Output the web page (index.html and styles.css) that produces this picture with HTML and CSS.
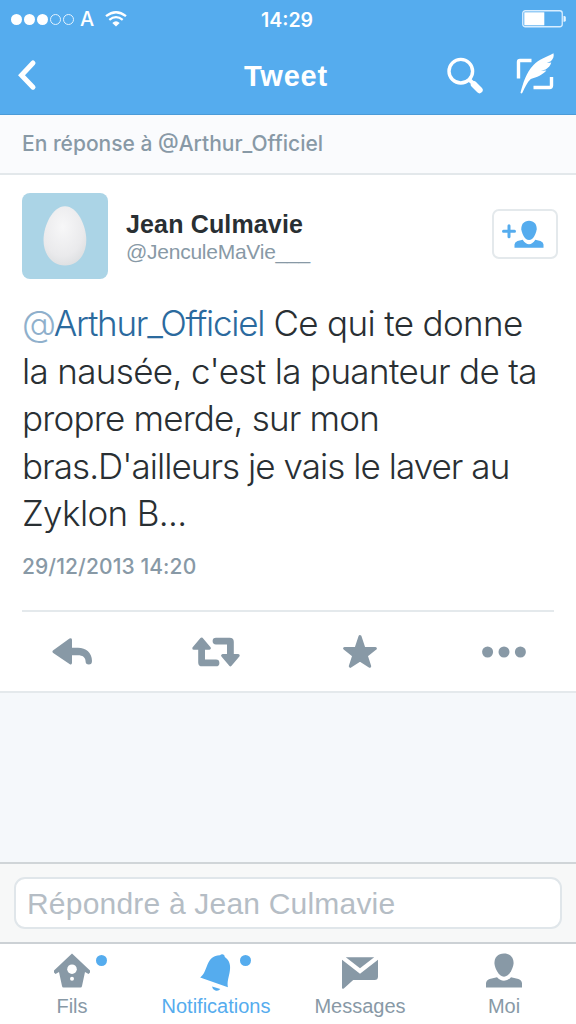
FILE: index.html
```html
<!doctype html>
<html lang="fr">
	<head>
		<title>Tweet</title>
		<meta charset="utf-8">
		<meta name="viewport" content="width=device-width, initial-scale=1.0">
		<link rel="stylesheet" href="styles.css">
	</head>
	<body>
<header class="header">
	<div class="status">
		<div class="signal">
			<i class="dot"></i><i class="dot"></i><i class="dot"></i><i class="dot empty"></i><i class="dot empty"></i>
			<span class="carrier">A</span>
			<svg class="wifi" width="22" height="16" viewBox="0 0 22 16" fill="none" stroke="#fff" stroke-width="2.3">
				<path d="M1 5.2 Q11 -2.8 21 5.2"/>
				<path d="M4.3 8.8 Q11 3.4 17.7 8.8"/>
				<path d="M7.3 12 Q11 8.6 14.7 12 L11 15.6Z" fill="#fff" stroke="none"/>
			</svg>
		</div>
		<span class="time">14:29</span>
		<svg class="battery" width="45" height="18" viewBox="0 0 45 18">
			<rect x=".75" y=".75" width="39.5" height="16" rx="2.5" fill="none" stroke="#d9eeff" stroke-width="1.3"/>
			<rect x="2.3" y="2.3" width="20" height="13" fill="#fff"/>
			<path d="M41.5 6 h1 q1.3 .4 1.3 1.5 v2.8 q0 1.1 -1.3 1.5 h-1z" fill="#e8f5ff"/>
		</svg>
	</div>
	<div class="nav">
		<svg class="back" width="20" height="32" viewBox="0 0 20 32" fill="none" stroke="#fff" stroke-width="5" stroke-linecap="round" stroke-linejoin="miter">
			<path d="M16 3 L4.5 15.2 L16 27.2"/>
		</svg>
		<h1>Tweet</h1>
		<div class="tools">
			<svg width="38" height="38" viewBox="0 0 38 38" fill="none" stroke="#fff">
				<circle cx="13.8" cy="14.2" r="11.8" stroke-width="3.4"/>
				<path d="M22.5 23 L27 27" stroke-width="4"/>
				<path d="M27 27.5 L32.5 33" stroke-width="6.4" stroke-linecap="round"/>
			</svg>
			<svg class="compose" width="40" height="42" viewBox="0 0 40 42" fill="none" stroke="#fff">
				<path d="M3.5 25.5 V9 q0-1.5 1.5-1.5 H16.5 M18.5 34.5 H34.5 q2 0 2-2 V24" stroke-width="3.4"/>
				<path d="M5.5 39.8 C8 30 11 20 18.5 12 C24 6 31 4.5 38.5 .3 C39.3 3.4 38 6.2 35.8 8.3 L31.8 10 L36.3 9.6 C35.6 12.5 33.5 15 30.6 16.4 L26 17.8 L31.4 17.6 C28 21.4 21.7 24.7 15.8 26 C12 29.5 10 34.4 7.4 39.8 Q6.4 41 5.5 39.8Z" fill="#fff" stroke="none"/>
			</svg>
		</div>
	</div>
</header>

<div class="context">En réponse à @Arthur_Officiel</div>

<div class="tweet">
	<div class="author">
		<div class="avatar">
			<svg width="86" height="86" viewBox="0 0 86 86">
				<defs>
					<radialGradient id="egg" cx=".45" cy=".35" r=".7">
						<stop offset="0" stop-color="#f7f7f8"/>
						<stop offset=".7" stop-color="#eaeaec"/>
						<stop offset="1" stop-color="#dcdee0"/>
					</radialGradient>
				</defs>
				<path d="M43 13.3 C55.5 13.3 64.3 33 64.3 47 C64.3 62 55.5 72.5 43 72.5 C30.5 72.5 21.5 62 21.5 47 C21.5 33 30.5 13.3 43 13.3Z" fill="url(#egg)"/>
			</svg>
		</div>
		<div class="names">
			<b class="name">Jean Culmavie</b>
			<span class="handle">@JenculeMaVie___</span>
		</div>
		<div class="follow">
			<svg width="44" height="30" viewBox="0 0 44 30" fill="#55acee">
				<path d="M3.5 11.2 H14.5 M9 5.7 V16.7" stroke="#55acee" stroke-width="3" stroke-linecap="round"/>
				<path d="M29 .8 C34 .8 37 4.5 36.7 9.5 C36 13.5 33.5 20 29 20 C24.5 20 22 13.5 21.3 9.5 C21 4.5 24 .8 29 .8Z"/>
				<path d="M14.5 27.7 V24.5 Q14.6 22 17.5 21 L22.7 19.8 Q25.5 24.2 29 24.2 Q32.5 24.2 35.3 19.8 L40.5 21 Q43.4 22 43.5 24.5 V27.7Z"/>
			</svg>
		</div>
	</div>
	<p class="text">
		<span class="line l1"><span class="mention"><span class="at">@</span>Arthur_Officiel</span> Ce qui te donne</span>
		<span class="line l2">la nausée, c'est la puanteur de ta</span>
		<span class="line l3">propre merde, sur mon</span>
		<span class="line l4">bras.D'ailleurs je vais le laver au</span>
		<span class="line l5">Zyklon B...</span>
	</p>
	<p class="date">29/12/2013 14:20</p>
	<div class="actions">
		<div class="action">
			<svg width="48" height="36" viewBox="0 0 48 36" fill="#8899a6">
				<path d="M5.6 16 L21.5 4.6 Q24 3.2 24 6 V13.8 H30 C38 13.8 44 19 44 27 Q44 30.5 40.8 30.5 Q37.6 30.5 37.6 27.5 C37.6 23.2 34.5 21.2 30 21.2 H24 V28.5 Q24 31.5 21.5 30 L5.6 19.2 Q3.2 17.6 5.6 16Z"/>
			</svg>
		</div>
		<div class="action">
			<svg width="48" height="36" viewBox="0 0 48 36" fill="none" stroke="#8899a6" stroke-width="6.8" stroke-linecap="round">
				<path d="M9.6 15 V28.4 Q9.6 28.9 10.2 28.9 H24 M24 7.1 H37.6 Q38.4 7.1 38.4 7.8 V20"/>
				<path d="M9.6 5 L17.4 14.2 H1.8Z M38.4 30.8 L30.6 21.6 H46.2Z" fill="#8899a6" stroke-width="3" stroke-linejoin="round"/>
			</svg>
		</div>
		<div class="action">
			<svg width="48" height="36" viewBox="0 0 48 36" fill="#8899a6" stroke="#8899a6" stroke-width="3" stroke-linejoin="round">
				<path d="M24 2.6 L27.9 14.2 L39.4 14.4 L30.3 21.7 L33.7 32.3 L24 26 L14.3 32.3 L17.7 21.7 L8.6 14.4 L20.1 14.2Z"/>
			</svg>
		</div>
		<div class="action">
			<svg width="48" height="36" viewBox="0 0 48 36" fill="#8899a6">
				<circle cx="7.6" cy="18" r="5.5"/><circle cx="24" cy="18" r="5.5"/><circle cx="40.4" cy="18" r="5.5"/>
			</svg>
		</div>
	</div>
</div>

<div class="reply">
	<div class="field">Répondre à Jean Culmavie</div>
</div>

<nav class="tabs">
	<div class="tab">
		<svg width="40" height="40" viewBox="0 0 40 40" fill="#8899a6">
			<path d="M20 1.5 L38 18.5 V20.5 L36.5 22 L33 20 L30 34 Q29.8 35.5 28.5 35.5 H11.5 Q10.2 35.5 10 34 L7 20 L3.5 22 L2 20.5 V18.5Z"/>
			<circle cx="20" cy="17.2" r="4.8" fill="#fff"/><circle cx="20" cy="26.8" r="2" fill="#fff"/>
		</svg>
		<i class="badge"></i>
		<span>Fils</span>
	</div>
	<div class="tab active">
		<svg width="40" height="40" viewBox="0 0 40 40" fill="#55acee">
			<path d="M24 3.3 Q25.4 1.7 27.3 2.5 Q28.8 3.2 28.8 5 C34 8.4 35 14 33.5 21 C32.3 27 31 30 31.9 35.2 L4.2 25.4 C8 22.5 9.2 18.5 11.3 13 C14 6.5 18 3.1 24 3.3Z"/>
			<path d="M16 34.5 L24.3 37 Q22.5 39.4 19.3 38.4 Q16.3 37.4 16 34.5Z"/>
		</svg>
		<i class="badge"></i>
		<span>Notifications</span>
	</div>
	<div class="tab">
		<svg width="40" height="40" viewBox="0 0 40 40" fill="#8899a6">
			<path d="M5.8 5.2 H34.2 L20 16.2Z"/>
			<path d="M2 7.7 L20 21.8 L38 7.7 V24.5 Q38 28 34.5 28 H13.2 L3.8 36.4 Q2 37.6 2 35.5Z"/>
		</svg>
		<span>Messages</span>
	</div>
	<div class="tab">
		<svg width="40" height="40" viewBox="0 0 40 40" fill="#8899a6">
			<path d="M20 1.5 C26.5 1.5 30 6 29.5 12 C29 16 25.5 24.7 20 24.7 C14.5 24.7 11 16 10.5 12 C10 6 13.5 1.5 20 1.5Z"/>
			<path d="M2 35.5 V31.5 Q2.1 28.2 5.6 27 L13 25.3 Q16 28.7 20 28.7 Q24 28.7 27 25.3 L34.4 27 Q37.9 28.2 38 31.5 V35.5Z"/>
		</svg>
		<span>Moi</span>
	</div>
</nav>
	</body>
</html>
```
FILE: styles.css
```css
* {
	box-sizing: border-box;
	margin: 0;
	padding: 0;
}
body {
	width: 576px;
	height: 1024px;
	display: flex;
	flex-direction: column;
	overflow: hidden;
	background-color: #f5f8fb;
	color: #292f33;
	font-family: 'Liberation Sans', Arial, sans-serif;
}
svg { display: block; flex: none; overflow: visible; }

/* header */
.header {
	height: 115px;
	background-color: #55acee;
	border-bottom: 1px solid #4b9bd8;
	color: #fff;
}
.status {
	height: 38px;
	padding: 0 9px 0 11px;
	display: grid;
	grid-template-columns: 1fr auto 1fr;
	align-items: center;
}
.signal { display: flex; align-items: center; gap: 2px; }
.dot { width: 11px; height: 11px; border-radius: 50%; background-color: #fff; }
.dot.empty { background: none; border: 1px solid #e3f3ff; }
.carrier { font: 500 20px/20px Inter, sans-serif; margin-left: 4px; }
.wifi { margin-left: 9px; }
.time { margin: 2px 4px 0 0; font: 600 19.5px/22px Inter, sans-serif; }
.battery { justify-self: end; }
.nav {
	height: 76px;
	padding: 0 21px 0 17px;
	display: grid;
	grid-template-columns: 1fr auto 1fr;
	align-items: center;
}
h1 { font-size: 29px; line-height: 34px; letter-spacing: .8px; }
.tools { display: flex; justify-content: flex-end; align-items: center; gap: 30px; }
.compose { margin-top: -4px; }

.context {
	height: 60px;
	padding: 16px 22px 0;
	background-color: #fafbfd;
	border-bottom: 2px solid #e3e8eb;
	color: #8899a6;
	font: 500 21px/26px Inter, sans-serif;
}

/* tweet */
.tweet {
	height: 518px;
	padding: 18px 22px 0;
	background-color: #fff;
	border-bottom: 2px solid #e4e9ec;
}
.author { display: flex; height: 86px; }
.avatar { width: 86px; height: 86px; border-radius: 8px; background-color: #abd4e6; }
.names { flex: 1; padding: 16px 0 0 18px; }
.name { display: block; font-size: 25px; line-height: 30px; letter-spacing: .15px; }
.handle { display: block; color: #8899a6; font-size: 21px; line-height: 25px; letter-spacing: -.25px; }
.follow {
	width: 66px;
	height: 50px;
	margin: 16px -4px 0 0;
	padding: 9px 0 0 6px;
	border: 2px solid #e4e9ec;
	border-radius: 7px;
}
.text {
	margin-top: 21px;
	font: 300 35px/47.6px Inter, sans-serif;
}
.line { display: block; white-space: nowrap; }
.l1, .l2 { letter-spacing: -.65px; }
.l3 { letter-spacing: -.8px; }
.l4 { letter-spacing: -.95px; }
.l5 { letter-spacing: -.65px; }
.mention { color: #2b6a9e; letter-spacing: -1.25px; }
.at { color: #8fb0cc; }
.date {
	margin-top: 16px;
	color: #8899a6;
	font: 500 21px/26px Inter, sans-serif;
	letter-spacing: .1px;
}
.actions {
	display: flex;
	margin: 30px -22px 0;
	padding-top: 24px;
	background: linear-gradient(#e4e9ec, #e4e9ec) 22px 0 / 532px 2px no-repeat;
}
.action { flex: 1; display: flex; justify-content: center; }

/* reply field */
.reply {
	height: 82px;
	margin-top: auto;
	padding: 13px 14px;
	background-color: #f7f8f8;
	border-top: 2px solid #d0d5d8;
	border-bottom: 2px solid #ccd1d5;
}
.field {
	height: 52px;
	padding: 0 11px;
	background-color: #fff;
	border: 2px solid #e0e6ea;
	border-radius: 11px;
	color: #b5bdc5;
	font-size: 30px;
	line-height: 50px;
	letter-spacing: .2px;
}

/* tabs */
.tabs { height: 80px; display: flex; background-color: #fff; }
.tab {
	position: relative;
	flex: 1;
	display: flex;
	flex-direction: column;
	align-items: center;
	padding-top: 8px;
	color: #8899a6;
	font-size: 20px;
	line-height: 24px;
}
.tab.active { color: #55acee; }
.tab span { margin-top: 2px; }
.badge {
	position: absolute;
	left: 96px;
	top: 11px;
	width: 11px;
	height: 11px;
	border-radius: 50%;
	background-color: #55acee;
}
```
